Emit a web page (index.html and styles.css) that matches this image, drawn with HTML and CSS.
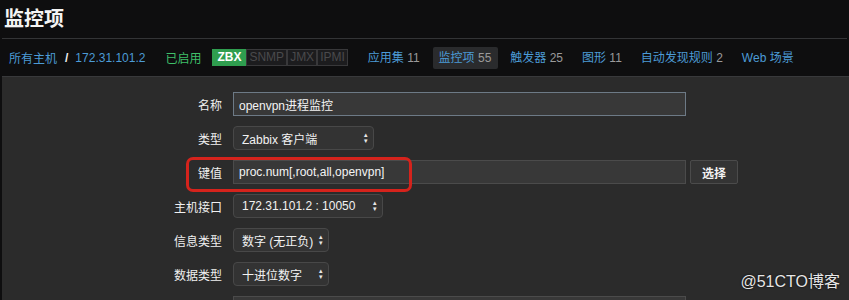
FILE: index.html
```html
<!DOCTYPE html>
<html lang="zh">
<head>
    <meta charset="UTF-8">
    <title>监控项</title>
    <link rel="stylesheet" href="styles.css">
</head>
<body>
    <div class="header">
        <h1>监控项</h1>
    </div>

    <div class="nav">
        <a class="link host">所有主机</a>
        <span class="slash">/</span>
        <a class="link ip">172.31.101.2</a>
        <span class="status">已启用</span>
        <div class="tags">
            <span class="tag on">ZBX</span><span class="tag">SNMP</span><span class="tag">JMX</span><span class="tag">IPMI</span>
        </div>
        <a class="link tab">应用集 <span class="count">11</span></a>
        <a class="link tab active">监控项 <span class="count">55</span></a>
        <a class="link tab">触发器 <span class="count">25</span></a>
        <a class="link tab">图形 <span class="count">11</span></a>
        <a class="link tab">自动发现规则 <span class="count">2</span></a>
        <a class="link tab">Web 场景</a>
    </div>

    <div class="panel">
        <div class="row">
            <label class="label">名称</label>
            <input class="field wide focused" type="text" value="openvpn进程监控">
        </div>
        <div class="row">
            <label class="label">类型</label>
            <div class="select w140"><span>Zabbix 客户端</span><span class="arrows">&#9652;<br>&#9662;</span></div>
        </div>
        <div class="row key-row">
            <div class="highlight"></div>
            <label class="label">键值</label>
            <input class="field wide" type="text" value="proc.num[,root,all,openvpn]">
            <button class="button">选择</button>
        </div>
        <div class="row">
            <label class="label">主机接口</label>
            <div class="select w150"><span>172.31.101.2 : 10050</span><span class="arrows">&#9652;<br>&#9662;</span></div>
        </div>
        <div class="row">
            <label class="label">信息类型</label>
            <div class="select w95"><span>数字 (无正负)</span><span class="arrows">&#9652;<br>&#9662;</span></div>
        </div>
        <div class="row">
            <label class="label">数据类型</label>
            <div class="select w95"><span>十进位数字</span><span class="arrows">&#9652;<br>&#9662;</span></div>
        </div>
        <div class="row">
            <label class="label"></label>
            <div class="field wide"></div>
        </div>
        <div class="watermark">@51CTO博客</div>
    </div>
</body>
</html>
```

FILE: styles.css
```css
* {
    box-sizing: border-box;
}

body {
    margin: 0;
    padding: 0;
    background-color: #0e0e0f;
    font-family: "Liberation Sans", "Noto Sans CJK SC", sans-serif;
    font-size: 12px;
    color: #f2f2f2;
    overflow: hidden;
    height: 300px;
}

.header {
    height: 39px;
    margin: 0 2px;
    padding: 7px 0 0 2px;
    border-bottom: 1px solid #333436;
}

h1 {
    margin: 0;
    font-size: 20px;
    line-height: 24px;
    font-weight: bold;
    color: #f4f4f4;
}

.nav {
    display: flex;
    align-items: center;
    height: 37px;
    padding: 0 0 0 9px;
}

.nav > * {
    flex: none;
    white-space: nowrap;
}

.link {
    color: #4c9bd6;
}

.slash {
    color: #f0f0f0;
    font-weight: bold;
    margin: 0 7px 0 8px;
}

.ip {
    margin-right: 20px;
}

.status {
    color: #3fbf69;
    margin-right: 11px;
}

.tags {
    display: flex;
    margin-right: 14px;
}

.tag {
    height: 17px;
    line-height: 15px;
    padding: 0 2px;
    border: 1px solid #38383a;
    background: #1c1c1e;
    color: #4a4a4c;
    font-size: 12px;
}

.tag.on {
    background: #2f9e4f;
    border-color: #2f9e4f;
    color: #ffffff;
    font-weight: bold;
    padding: 0 4px;
}

.tab {
    padding: 0 7px 0 6px;
    height: 22px;
    line-height: 22px;
    margin-right: 6px;
    border-radius: 2px;
}

.tab.active {
    background: #2a2b2d;
}

.count {
    color: #9a9a9a;
}

.panel {
    position: relative;
    margin: 0 0 0 2px;
    padding: 15px 0 0 0;
    background: #2b2b2b;
    height: 224px;
    border-top: 1px solid #38393b;
    overflow: hidden;
}

.row {
    position: relative;
    display: flex;
    align-items: center;
    height: 24px;
    margin-bottom: 10px;
}

.label {
    flex: none;
    width: 220px;
    margin-right: 11px;
    text-align: right;
    color: #f0f0f0;
}

.field {
    flex: none;
    height: 24px;
    padding: 0 5px;
    background: #383838;
    border: 1px solid #4b4b4b;
    color: #f4f4f4;
    font-family: "Liberation Sans", "Noto Sans CJK SC", sans-serif;
    font-size: 12px;
}

.field.wide {
    width: 453px;
}

.field.focused {
    border-color: #6d7a86;
}

.select {
    flex: none;
    display: flex;
    align-items: center;
    justify-content: space-between;
    height: 24px;
    padding: 0 5px 0 8px;
    background: #333333;
    border: 1px solid #484848;
    border-radius: 4px;
    color: #f2f2f2;
    white-space: nowrap;
}

.arrows {
    margin-left: 3px;
    font-size: 7px;
    line-height: 6px;
    color: #e8e8e8;
    text-align: center;
}

.w140 { width: 141px; }
.w150 { width: 150px; }
.w95 { width: 96px; }

.button {
    flex: none;
    height: 24px;
    width: 48px;
    margin-left: 4px;
    background: #343434;
    border: 1px solid #4b4b4b;
    border-radius: 2px;
    color: #f2f2f2;
    font-family: "Liberation Sans", "Noto Sans CJK SC", sans-serif;
    font-size: 12px;
    font-weight: bold;
}

.highlight {
    position: absolute;
    left: 184px;
    top: -3px;
    width: 226px;
    height: 35px;
    border: 3px solid #d5231c;
    border-radius: 7px;
    pointer-events: none;
}

.watermark {
    position: absolute;
    right: 9px;
    bottom: 8px;
    font-size: 16px;
    color: #e6e6e6;
    text-shadow: 0 0 2px #000;
}
```
